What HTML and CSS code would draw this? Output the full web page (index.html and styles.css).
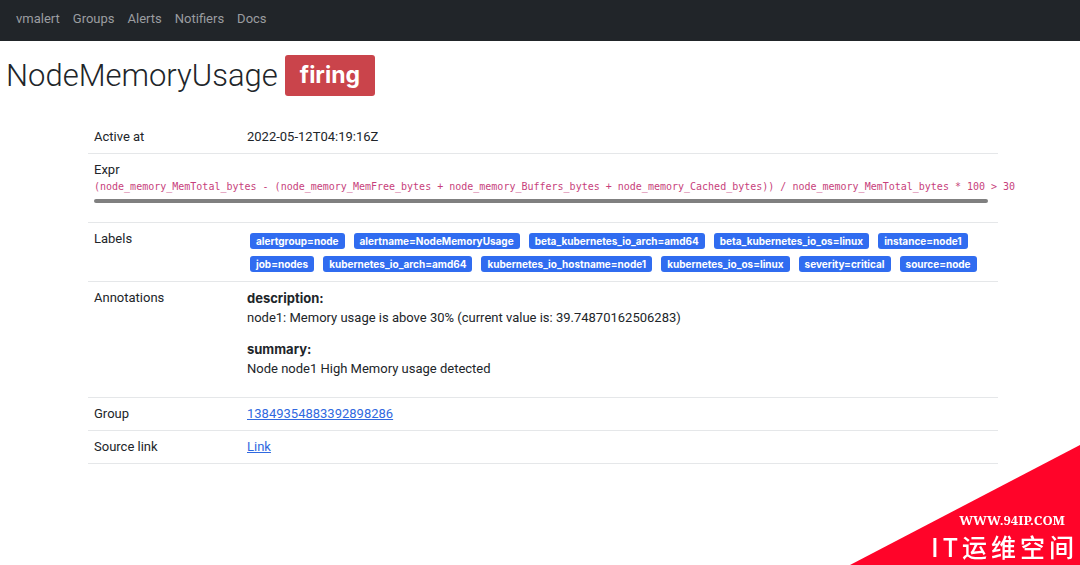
FILE: index.html
```html
<!DOCTYPE html>
<html lang="en">
<head>
<meta charset="utf-8">
<meta name="viewport" content="width=device-width, initial-scale=1">
<title>vmalert - NodeMemoryUsage</title>
<link rel="stylesheet" href="styles.css">
</head>
<body>
<nav class="navbar">
  <a href="#">vmalert</a>
  <a href="#">Groups</a>
  <a href="#">Alerts</a>
  <a href="#">Notifiers</a>
  <a href="#">Docs</a>
</nav>
<main>
  <h1 class="title">NodeMemoryUsage <span class="state">firing</span></h1>
  <div class="container">
    <table class="details">
      <tbody>
        <tr><th scope="row">Active at</th><td>2022-05-12T04:19:16Z</td></tr>
        <tr>
          <td colspan="2">
            <div>Expr</div>
            <pre class="expr"><code>(node_memory_MemTotal_bytes - (node_memory_MemFree_bytes + node_memory_Buffers_bytes + node_memory_Cached_bytes)) / node_memory_MemTotal_bytes * 100 &gt; 30</code></pre>
            <div class="scrollbar"></div>
          </td>
        </tr>
        <tr>
          <th scope="row">Labels</th>
          <td>
            <div class="labels">
              <span class="badge">alertgroup=node</span>
              <span class="badge">alertname=NodeMemoryUsage</span>
              <span class="badge">beta_kubernetes_io_arch=amd64</span>
              <span class="badge">beta_kubernetes_io_os=linux</span>
              <span class="badge">instance=node1</span>
              <span class="badge">job=nodes</span>
              <span class="badge">kubernetes_io_arch=amd64</span>
              <span class="badge">kubernetes_io_hostname=node1</span>
              <span class="badge">kubernetes_io_os=linux</span>
              <span class="badge">severity=critical</span>
              <span class="badge">source=node</span>
            </div>
          </td>
        </tr>
        <tr>
          <th scope="row">Annotations</th>
          <td>
            <p class="note"><b>description:</b><br>node1: Memory usage is above 30% (current value is: 39.74870162506283)</p>
            <p class="note"><b>summary:</b><br>Node node1 High Memory usage detected</p>
          </td>
        </tr>
        <tr><th scope="row">Group</th><td><a href="#">13849354883392898286</a></td></tr>
        <tr><th scope="row">Source link</th><td><a href="#">Link</a></td></tr>
      </tbody>
    </table>
  </div>
</main>
<aside class="corner">
  <svg class="corner-shape" viewBox="0 0 230 120" aria-hidden="true"><path d="M230 0V120H0Z" fill="#ff0429"/></svg>
  <div class="corner-text">
    <div class="corner-url">WWW.94IP.COM</div>
    <div class="corner-name"><span>I</span><span>T</span><span>运</span><span>维</span><span>空</span><span>间</span></div>
  </div>
</aside>
</body>
</html>
```
FILE: styles.css
```css
* { box-sizing: border-box; }
body {
  margin: 0;
  background: #fff;
  color: #212529;
  font: 13px/20px Roboto, "Liberation Sans", sans-serif;
}
.navbar {
  display: flex;
  gap: 13px;
  padding: 9px 16px 12px;
  background: #212529;
}
.navbar a {
  color: #9b9da0;
  text-decoration: none;
}
.title {
  display: flex;
  align-items: center;
  gap: 7px;
  margin: 14px 6px 25px;
  font-size: 31px;
  line-height: 37px;
  font-weight: 300;
}
.state {
  padding: 2px 15px;
  border-radius: 3px;
  background: #ca444b;
  color: #fff;
  font-family: Inter, sans-serif;
  font-size: 23px;
  font-weight: 700;
}
.container { padding: 0 82px 0 88px; }
.details {
  width: 100%;
  table-layout: fixed;
  border-collapse: separate;
  border-spacing: 0;
}
.details th,
.details td {
  padding: 6px;
  border-bottom: 1px solid #e5e7e9;
  font-weight: 400;
  text-align: left;
  vertical-align: top;
}
.details th { width: 153px; }
.details a { color: #3069e0; }
.expr {
  margin: 0;
  color: #c73f7c;
  font: 10px/13px "DejaVu Sans Mono", "Liberation Mono", monospace;
}
.expr code { font: inherit; }
.scrollbar {
  height: 4px;
  margin: 6px 4px 13px 0;
  border-radius: 2px;
  background: #808080;
}
.labels {
  display: flex;
  flex-wrap: wrap;
  gap: 7px 9px;
  padding: 4px 3px 3px;
}
.badge {
  padding: 0 6px;
  border-radius: 3px;
  background: #306cf0;
  color: #fff;
  font-family: Inter, sans-serif;
  font-size: 10px;
  line-height: 16px;
  font-weight: 700;
}
.note { margin: 1px 0 13px; line-height: 19px; }
.note b { font-family: Inter, sans-serif; }
.corner {
  position: fixed;
  right: 0;
  bottom: 0;
  width: 230px;
  color: #fff;
}
.corner-shape { display: block; width: 100%; }
.corner-text {
  position: absolute;
  right: 6px;
  bottom: 0;
}
.corner-url {
  padding-right: 9px;
  text-align: right;
  font: 700 13px/16px "Noto Serif", "DejaVu Serif", "Liberation Serif", serif;
}
.corner-name {
  display: flex;
  justify-content: flex-end;
  gap: 4px;
  font: 500 25px/37px "Noto Sans CJK SC", sans-serif;
}
```
